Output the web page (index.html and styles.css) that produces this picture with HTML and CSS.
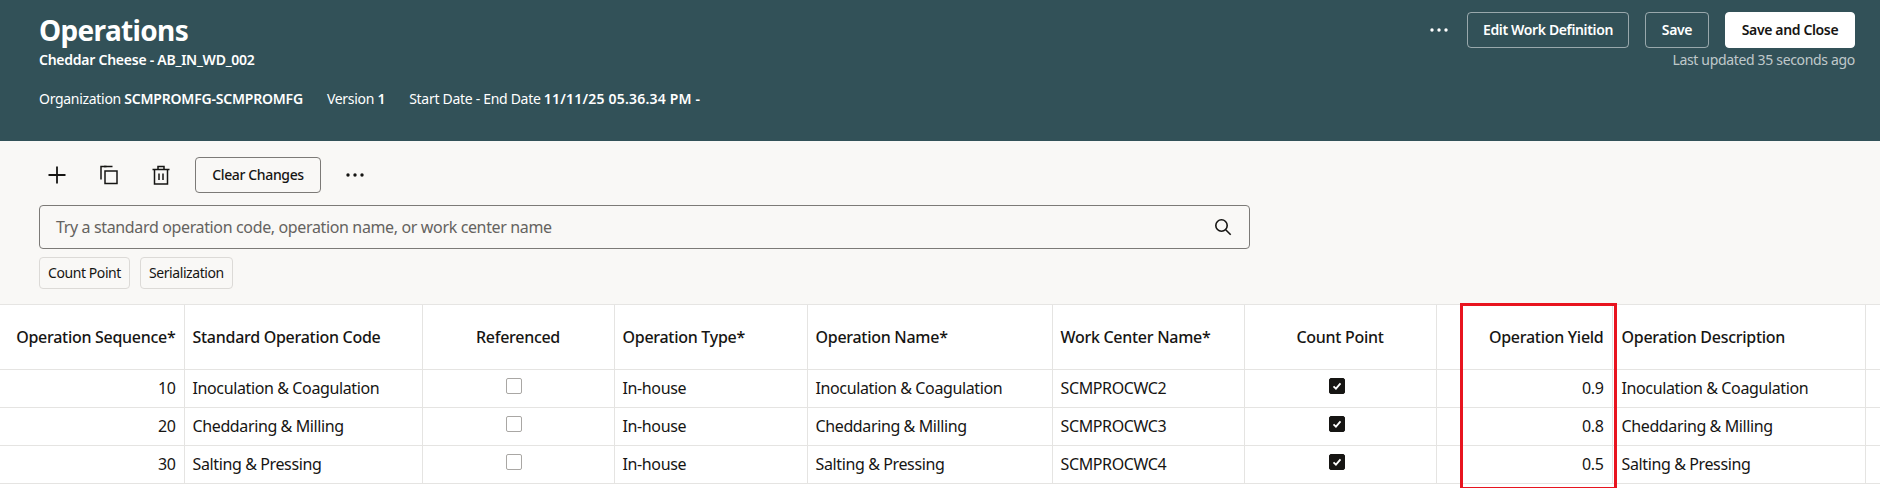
FILE: index.html
```html
<!DOCTYPE html>
<html lang="en">
<head>
<meta charset="utf-8">
<title>Operations</title>
<link rel="stylesheet" href="styles.css">
</head>
<body>
<header class="page-head">
  <div class="head-left">
    <h1 class="title">Operations</h1>
    <div class="subtitle">Cheddar Cheese - AB_IN_WD_002</div>
    <div class="meta">
      <span>Organization <b>SCMPROMFG-SCMPROMFG</b></span>
      <span>Version <b>1</b></span>
      <span>Start Date - End Date <b class="date">11/11/25 05.36.34 PM -</b></span>
    </div>
  </div>
  <div class="head-right">
    <div class="head-actions">
      <svg class="dots dots-head" viewBox="0 0 18 4"><circle cx="2" cy="2" r="1.7"/><circle cx="9" cy="2" r="1.7"/><circle cx="16" cy="2" r="1.7"/></svg>
      <button class="btn btn-ghost btn-edit">Edit Work Definition</button>
      <button class="btn btn-ghost btn-save">Save</button>
      <button class="btn btn-solid">Save and Close</button>
    </div>
    <div class="updated">Last updated 35 seconds ago</div>
  </div>
</header>
<section class="tools">
  <div class="toolbar">
    <svg class="icon icon-add" viewBox="0 0 24 24"><path d="M12 3.5v17M3.5 12h17"/></svg>
    <svg class="icon icon-copy" viewBox="0 0 24 24"><path d="M9.5 3.5h-5.5v13"/><path d="M7 3.5h8.5"/><rect x="8" y="8" width="12" height="12.5"/></svg>
    <svg class="icon icon-trash" viewBox="0 0 24 24"><path d="M3.5 6.5h17M9 6.5v-3h6v3M5.5 6.5v14.5h13v-14.500M10 10.500v6.500M14 10.500v6.500"/></svg>
    <button class="btn btn-clear">Clear Changes</button>
    <svg class="dots dots-tool" viewBox="0 0 18 4"><circle cx="2" cy="2" r="1.7"/><circle cx="9" cy="2" r="1.7"/><circle cx="16" cy="2" r="1.7"/></svg>
  </div>
  <div class="search">
    <span class="placeholder">Try a standard operation code, operation name, or work center name</span>
    <svg class="search-icon" viewBox="0 0 18 18"><circle cx="7.500" cy="7.500" r="5.700"/><path d="M11.700 11.700l5 5"/></svg>
  </div>
  <div class="chips">
    <span class="chip">Count Point</span>
    <span class="chip">Serialization</span>
  </div>
</section>
<section class="grid-wrap">
  <table class="grid">
    <colgroup>
      <col class="c1"><col class="c2"><col class="c3"><col class="c4"><col class="c5"><col class="c6"><col class="c7"><col class="c8"><col class="c9"><col class="c10"><col>
    </colgroup>
    <thead>
      <tr>
        <th class="num">Operation Sequence*</th>
        <th>Standard Operation Code</th>
        <th class="mid">Referenced</th>
        <th>Operation Type*</th>
        <th>Operation Name*</th>
        <th>Work Center Name*</th>
        <th class="mid">Count Point</th>
        <th></th>
        <th class="num">Operation Yield</th>
        <th class="desc">Operation Description</th>
        <th></th>
      </tr>
    </thead>
    <tbody>
      <tr>
        <td class="num">10</td><td>Inoculation &amp; Coagulation</td>
        <td class="chk-ref"><span class="check"></span></td>
        <td>In-house</td><td>Inoculation &amp; Coagulation</td><td>SCMPROCWC2</td>
        <td class="chk-count"><span class="check on"><svg viewBox="0 0 16 16"><path d="M4 8.300l2.800 2.700 5.200-6"/></svg></span></td>
        <td></td><td class="num">0.9</td><td class="desc">Inoculation &amp; Coagulation</td><td></td>
      </tr>
      <tr>
        <td class="num">20</td><td>Cheddaring &amp; Milling</td>
        <td class="chk-ref"><span class="check"></span></td>
        <td>In-house</td><td>Cheddaring &amp; Milling</td><td>SCMPROCWC3</td>
        <td class="chk-count"><span class="check on"><svg viewBox="0 0 16 16"><path d="M4 8.300l2.800 2.700 5.200-6"/></svg></span></td>
        <td></td><td class="num">0.8</td><td class="desc">Cheddaring &amp; Milling</td><td></td>
      </tr>
      <tr>
        <td class="num">30</td><td>Salting &amp; Pressing</td>
        <td class="chk-ref"><span class="check"></span></td>
        <td>In-house</td><td>Salting &amp; Pressing</td><td>SCMPROCWC4</td>
        <td class="chk-count"><span class="check on"><svg viewBox="0 0 16 16"><path d="M4 8.300l2.800 2.700 5.200-6"/></svg></span></td>
        <td></td><td class="num">0.5</td><td class="desc">Salting &amp; Pressing</td><td></td>
      </tr>
    </tbody>
  </table>
  <div class="highlight"></div>
</section>
</body>
</html>
```

FILE: styles.css
```css
* { box-sizing: border-box; }
html, body { margin: 0; padding: 0; }
body {
  width: 1880px;
  height: 488px;
  overflow: hidden;
  background: #fff;
  color: #161513;
  font-family: "Noto Sans", "Liberation Sans", sans-serif;
  font-size: 16px;
  letter-spacing: -0.35px;
}
.page-head {
  height: 141px;
  background: #325158;
  color: #fff;
  padding: 12px 25px 0 39px;
  display: flex;
  justify-content: space-between;
}
.title { margin: 0; font-size: 28px; line-height: 36px; font-weight: 700; letter-spacing: -0.65px; }
.subtitle { font-size: 14px; line-height: 20px; font-weight: 600; margin-top: 2px; letter-spacing: -0.25px; }
.meta { display: flex; gap: 24px; font-size: 14px; line-height: 20px; margin-top: 19px; letter-spacing: -0.3px; }
.meta b { font-weight: 600; letter-spacing: -0.2px; }
.meta .date { letter-spacing: 0.2px; }
.head-right { display: flex; flex-direction: column; align-items: flex-end; }
.head-actions { display: flex; align-items: center; }
.dots { display: block; width: 18px; height: 4px; }
.dots-head { fill: #fff; margin-right: 19px; }
.dots-tool { fill: #161513; margin-left: 25px; }
.btn {
  height: 36px;
  border-radius: 4px;
  font: 600 14px/20px "Noto Sans", "Liberation Sans", sans-serif;
  letter-spacing: -0.36px;
  padding: 0;
  cursor: pointer;
}
.btn-ghost { background: transparent; color: #fff; border: 1px solid rgba(255,255,255,.5); }
.btn-edit { width: 162px; margin-right: 16px; }
.btn-save { width: 64px; margin-right: 16px; }
.btn-solid { width: 130px; background: #fff; color: #161513; border: 1px solid #fff; }
.updated { font-size: 14px; line-height: 20px; color: rgba(255,255,255,.7); margin-top: 2px; letter-spacing: -0.33px; }
.tools {
  height: 164px;
  background: #f9f8f6;
  padding: 16px 0 0 39px;
  border-bottom: 1px solid #e6e5e3;
}
.toolbar { display: flex; align-items: center; height: 36px; }
.icon { width: 24px; height: 24px; fill: none; stroke: #161513; stroke-width: 1.500; flex: none; }
.icon-add { margin: 0 0 0 6px; stroke-width: 1.800; }
.icon-copy { margin-left: 28px; }
.icon-trash { margin-left: 28px; }
.btn-clear {
  width: 126px;
  margin-left: 22px;
  background: transparent;
  color: #161513;
  border: 1px solid #7c7a77;
  font-weight: 500;
}
.search {
  width: 1211px;
  height: 44px;
  margin-top: 12px;
  border: 1px solid #7c7a77;
  border-radius: 4px;
  display: flex;
  align-items: center;
  justify-content: space-between;
  padding: 0 17px 0 16px;
}
.placeholder { color: #65635f; font-size: 16px; letter-spacing: -0.36px; }
.search-icon { width: 18px; height: 18px; fill: none; stroke: #161513; stroke-width: 1.600; }
.chips { display: flex; gap: 10px; margin-top: 8px; }
.chip {
  height: 32px;
  padding: 0 8px;
  border: 1px solid #dcdad7;
  border-radius: 4px;
  font-size: 14px;
  line-height: 30px;
  color: #161513;
  letter-spacing: -0.42px;
}
.grid-wrap { position: relative; height: 183px; background: #fff; }
.grid { border-collapse: collapse; table-layout: fixed; width: 1880px; }
.c1 { width: 184px; }
.c2 { width: 238px; }
.c3 { width: 192px; }
.c4 { width: 193px; }
.c5 { width: 245px; }
.c6 { width: 192px; }
.c7 { width: 192px; }
.c8 { width: 24px; }
.c9 { width: 152px; }
.c10 { width: 253px; }
.grid th, .grid td {
  border-right: 1px solid #e5e4e2;
  border-bottom: 1px solid #e5e4e2;
  padding: 0 8px;
  white-space: nowrap;
  text-align: left;
}
.grid th:last-child, .grid td:last-child { border-right: 0; }
.grid th {
  height: 64px;
  font-size: 16px;
  font-weight: 500;
  letter-spacing: -0.28px;
  vertical-align: top;
  padding-top: 21px;
  line-height: 22px;
}
.grid td { height: 38px; font-size: 16px; line-height: 22px; font-weight: 400; letter-spacing: -0.38px; }
.grid .num { text-align: right; padding-right: 8px; }
.grid .mid { text-align: center; }
.grid .desc { padding-left: 9px; }
.grid .chk-ref { padding-right: 17px; }
.grid .chk-count { padding-right: 15px; }
.check {
  display: block;
  width: 16px;
  height: 16px;
  margin: -4px auto 0;
  border: 1px solid #a9a7a4;
  border-radius: 2px;
  background: #fff;
}
.check.on { background: #161513; border-color: #161513; }
.check svg { display: block; width: 14px; height: 14px; fill: none; stroke: #fff; stroke-width: 2; }
.highlight {
  position: absolute;
  left: 1460px;
  top: -2px;
  width: 157px;
  height: 187px;
  border: 3px solid #e8141f;
  pointer-events: none;
}
```
